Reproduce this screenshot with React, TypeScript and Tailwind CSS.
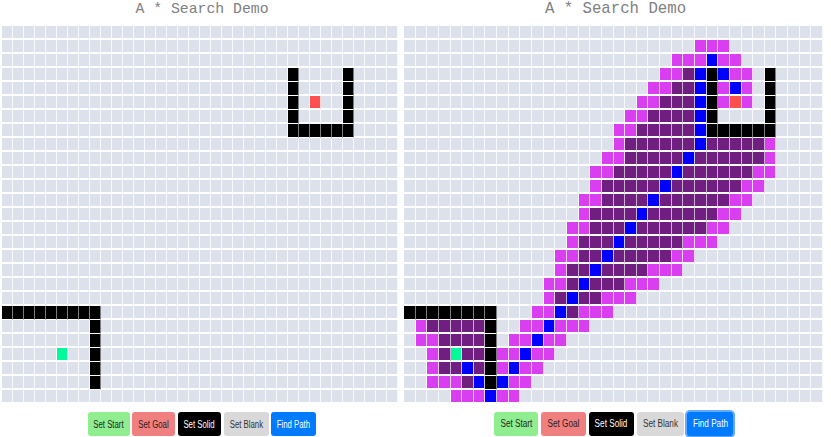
const emptyRows = (n: number) => Array.from({ length: n }, () => '');

// run length rows: "3m" = three magenta, '.' blank, '#' wall, p closed, b path, s start, g goal
const leftBoard = [
  ...emptyRows(3),
  '26.#4.#',
  '26.#4.#',
  '26.#.g2.#',
  '26.#4.#',
  '26.6#',
  ...emptyRows(12),
  '9#',
  '8.#',
  '8.#',
  '5.s2.#',
  '8.#',
  '8.#',
  '',
];

const rightBoard = [
  '',
  '25.3m',
  '23.3mb2m',
  '22.2mpb#b2m.#',
  '21.2m2pb#mbm.#',
  '20.2m3pb#mgm.#',
  '19.2m4pb#4.#',
  '18.2m5pb6#',
  '18.m6pb5pm',
  '17.2m5pb6pm',
  '16.2m5pb6p2m',
  '16.m5pb6p2m',
  '15.2m4pb6p2m',
  '15.m4pb6p2m',
  '14.2m3pb6p2m',
  '14.m3pb5p3m',
  '13.2m2pb5p2m',
  '13.m2pb4p3m',
  '12.2mpb3p3m',
  '12.mpb2p3m',
  '8#3.2mbp3m',
  '.m5p#2.2mb3m',
  '.2m4p#.2mb2m',
  '2.mps2p#2mb2m',
  '2.m2pbp#mb2m',
  '2.3mpb#b2m',
  '4.3mb2m',
];

const decode = (row: string) => {
  let out = '';
  for (const [, n, c] of row.matchAll(/(\d*)([.#mpbsg])/g)) {
    out += c.repeat(n ? Number(n) : 1);
  }
  return out.padEnd(36, '.').split('');
};

const cellColors: Record<string, string> = {
  '.': 'bg-[#dce1ec] border-b-2 border-r-[#f8f9fc]',
  '#': 'bg-black border-b border-r-[#7d7d7d]',
  m: 'bg-[#d93ff0] border-b-2 border-r-[#f6d8fa]',
  p: 'bg-[#701f80] border-b-2 border-r-[#c9b0cf]',
  b: 'bg-[#0000ff] border-b-2 border-r-[#c8c8fb]',
  s: 'bg-[#00fa9a] border-b-2 border-r-[#e0f8ef]',
  g: 'bg-[#ff5050] border-b-2 border-r-[#fbd8d8]',
};

const Board = ({ rows }: { rows: string[] }) => (
  <div className="grid w-full grid-cols-[repeat(36,1fr)] bg-white">
    {rows.flatMap((row, r) =>
      decode(row).map((c, i) => (
        <div key={`${r}-${i}`} className={`h-[14px] border-r border-b-white ${cellColors[c]}`} />
      ))
    )}
  </div>
);

const buttons = [
  { label: 'Set Start', color: 'bg-[#90ee90] text-[#1c2a1c]', left: 'w-[42px]', right: 'w-[44.5px]' },
  { label: 'Set Goal', color: 'bg-[#f08080] text-[#2c1c1c]', left: 'w-[43px]', right: 'w-[44.5px]' },
  { label: 'Set Solid', color: 'bg-black text-white', left: 'w-[43.5px]', right: 'w-[45.7px]' },
  { label: 'Set Blank', color: 'bg-[#d9d9d9] text-[#333333]', left: 'w-[45px]', right: 'w-[47px]' },
  { label: 'Find Path', color: 'bg-[#007bff] text-white', left: 'w-[45px]', right: 'w-[46px]' },
];

const Panel = ({
  rows,
  side,
  widthClass,
  titleClass,
  rowClass,
  textClass,
}: {
  rows: string[];
  side: 'left' | 'right';
  widthClass: string;
  titleClass: string;
  rowClass: string;
  textClass: string;
}) => (
  <div className={`flex flex-col items-center ${widthClass}`}>
    <h1 className={`h-[26px] pl-[4px] font-['Liberation_Mono',monospace] leading-[19px] font-normal text-[#808080] ${titleClass}`}>
      A * Search Demo
    </h1>
    <Board rows={rows} />
    <div className={`mt-[8px] flex font-['Liberation_Sans',sans-serif] ${rowClass}`}>
      {buttons.map((b) => (
        <button
          key={b.label}
          className={`flex h-[24px] items-center justify-center rounded-[3px] whitespace-nowrap ${b[side]} ${b.color} ${
            side === 'right' && b.label === 'Find Path' ? 'ring-2 ring-[#66aaff]' : ''
          }`}
        >
          <span className={`inline-block scale-x-[0.78] ${textClass}`}>{b.label}</span>
        </button>
      ))}
    </div>
  </div>
);

export default function App() {
  return (
    <div className="flex h-[437px] w-[831px] overflow-hidden bg-white pl-[2px]">
      <Panel
        rows={leftBoard}
        side="left"
        widthClass="w-[396px]"
        titleClass="text-[14.8px]"
        rowClass="ml-[4px] gap-[2.5px]"
        textClass="text-[10px]"
      />
      <div className="ml-[6px]">
        <Panel
          rows={rightBoard}
          side="right"
          widthClass="w-[419px]"
          titleClass="text-[15.7px]"
          rowClass="gap-[2.9px]"
          textClass="text-[10.5px]"
        />
      </div>
    </div>
  );
}
